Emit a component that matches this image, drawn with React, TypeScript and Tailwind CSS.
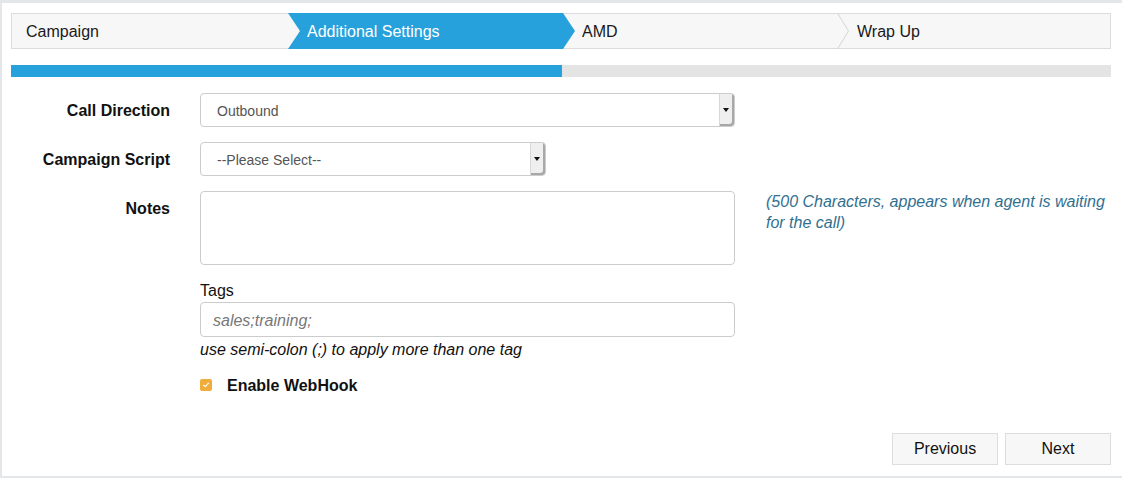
import React from 'react';

const steps = [
  { label: 'Campaign', width: 'w-[276px]', pad: 'pl-[14px]' },
  { label: 'Additional Settings', width: 'w-[275px]', pad: 'pl-[19px]', active: true },
  { label: 'AMD', width: 'w-[275px]', pad: 'pl-[19px]', divider: true },
  { label: 'Wrap Up', width: 'flex-1', pad: 'pl-[19px]' },
];

function StepBar() {
  return (
    <div className="flex h-[36px] border border-[#dcdcdc] bg-[#f7f7f7]">
      {steps.map((s) => (
        <div key={s.label} className={`relative flex items-center ${s.width} ${s.pad}`}>
          {s.active && (
            <svg
              className="absolute left-0 -top-px h-[36px] w-[287px]"
              viewBox="0 0 287 36"
              preserveAspectRatio="none"
              aria-hidden
            >
              <polygon points="0,0 275,0 287,18 275,36 0,36 12,18" fill="#27a1db" />
            </svg>
          )}
          {s.divider && (
            <svg
              className="absolute -right-[12px] -top-px h-[36px] w-[13px]"
              viewBox="0 0 13 36"
              aria-hidden
            >
              <polyline points="0.5,0 11.5,18 0.5,36" fill="none" stroke="#d4d4d4" strokeWidth="1" />
            </svg>
          )}
          <span className={`relative pt-[2px] text-[16px] ${s.active ? 'text-white' : 'text-[#1a1a1a]'}`}>
            {s.label}
          </span>
        </div>
      ))}
    </div>
  );
}

function FakeSelect({ value, width }: { value: string; width: string }) {
  return (
    <div
      className={`flex h-[34px] ${width} items-center rounded-[4px] border border-[#cccccc] bg-white text-[14px] text-[#555555]`}
    >
      <span className="flex-1 pl-[16px] pt-[2px]">{value}</span>
      <div className="flex h-full w-[15px] items-center justify-center rounded-r-[3px] border-l border-[#d8d8d8] bg-[#efefef] shadow-[inset_-2px_-2px_0_#a8a8a8]">
        <svg viewBox="0 0 6 4" className="h-[4px] w-[6px] -translate-x-px" aria-hidden>
          <polygon points="0,0 6,0 3,4" fill="#111" />
        </svg>
      </div>
    </div>
  );
}

function Label({ children }: { children: React.ReactNode }) {
  return (
    <div className="flex h-[34px] w-[159px] shrink-0 items-center justify-end pt-[2px] text-[16px] font-bold text-[#111]">
      {children}
    </div>
  );
}

export default function App() {
  return (
    <div className="h-[478px] w-[1122px] overflow-hidden border-t-[3px] border-b-2 border-l-2 border-[#e4e7ea] bg-white pl-[9px] pr-[11px] pt-[10px] font-['Liberation_Sans',Arial,sans-serif]">
      <StepBar />

      <div className="mt-[16px] flex h-[12px] bg-[#e4e4e4]">
        <div className="h-full w-[551px] bg-[#27a1db]" />
      </div>

      <div className="mt-[16px] flex flex-col gap-[15px]">
        <div className="flex gap-[30px]">
          <Label>Call Direction</Label>
          <FakeSelect value="Outbound" width="w-[535px]" />
        </div>
        <div className="flex gap-[30px]">
          <Label>Campaign Script</Label>
          <FakeSelect value="--Please Select--" width="w-[346px]" />
        </div>
        <div className="flex gap-[30px]">
          <Label>Notes</Label>
          <div className="h-[74px] w-[535px] rounded-[4px] border border-[#cccccc] bg-white" />
          <p className="ml-px w-[345px] text-[16px] italic leading-[21px] text-[#31708f]">
            (500 Characters, appears when agent is waiting for the call)
          </p>
        </div>
      </div>

      <div className="ml-[189px] w-[535px]">
        <div className="mt-[17px] text-[16px] leading-[18px] text-[#111]">Tags</div>
        <div className="mt-[2px] flex h-[35px] items-center rounded-[4px] border border-[#cccccc] bg-white pl-[12px] pt-[2px] text-[16px] italic text-[#777777]">
          sales;training;
        </div>
        <p className="mt-[4px] text-[16px] italic leading-[18px] text-[#111]">
          use semi-colon (;) to apply more than one tag
        </p>
        <label className="mt-[17px] flex h-[18px] items-center gap-[15px]">
          <span className="flex h-[12px] w-[12px] items-center justify-center rounded-[2px] bg-[#f0ad3c]">
            <svg viewBox="0 0 10 10" className="h-[8px] w-[8px]" aria-hidden>
              <polyline
                points="2,5.2 4.2,7.2 8,2.6"
                fill="none"
                stroke="#fff"
                strokeWidth="1.4"
                strokeLinecap="round"
                strokeLinejoin="round"
              />
            </svg>
          </span>
          <span className="pt-[2px] text-[16px] font-bold text-[#111]">Enable WebHook</span>
        </label>
      </div>

      <div className="mt-[39px] flex justify-end gap-[7px]">
        <button
          type="button"
          className="h-[32px] w-[106px] border border-[#dddddd] bg-[#f7f7f7] text-[16px] text-[#111]"
        >
          Previous
        </button>
        <button
          type="button"
          className="h-[32px] w-[106px] border border-[#dddddd] bg-[#f7f7f7] text-[16px] text-[#111]"
        >
          Next
        </button>
      </div>
    </div>
  );
}
